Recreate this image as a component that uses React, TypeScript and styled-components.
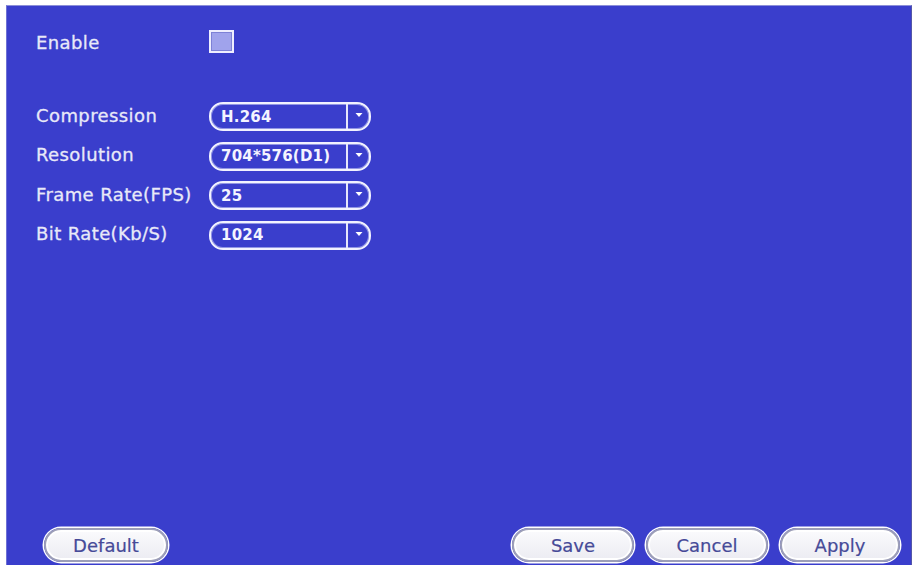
import React from "react";
import styled, { createGlobalStyle } from "styled-components";

const GlobalStyle = createGlobalStyle`
  html, body {
    margin: 0;
    padding: 0;
    background: #ffffff;
    overflow: hidden;
  }
  body {
    font-family: "DejaVu Sans", "Liberation Sans", sans-serif;
  }
`;

const Panel = styled.div`
  box-sizing: border-box;
  margin: 5px 0 0 6px;
  width: 906px;
  height: 560px;
  background: #3a3ecc;
  border-top: 1px solid #8c8fd8;
  border-right: 1px solid #5457a8;
  border-left: 1px solid #6e71d4;
  display: flex;
  flex-direction: column;
  padding: 24px 11px 3px 29px;
`;

const Form = styled.div`
  display: flex;
  flex-direction: column;
`;

const Row = styled.div<{ $gap?: number }>`
  display: flex;
  align-items: center;
  margin-top: ${(p) => p.$gap ?? 0}px;
`;

const Label = styled.span<{ $shift?: number }>`
  width: 173px;
  font-size: 18px;
  letter-spacing: 0.4px;
  color: #e8e9f8;
  -webkit-text-stroke: 0.3px #e8e9f8;
  margin-top: ${(p) => p.$shift ?? -3}px;
`;

const Check = styled.span`
  box-sizing: border-box;
  width: 25px;
  height: 23px;
  background: #a0a3ec;
  border: 2px solid #eeeeff;
  box-shadow: inset 0 0 0 1px #7d81d6;
`;

const SelectBox = styled.div`
  box-sizing: border-box;
  width: 162px;
  height: 29px;
  border: 2px solid #f2f2ff;
  border-radius: 14px;
  box-shadow: inset 0 0 0 1px #9296e4;
  display: flex;
  align-items: stretch;
  color: #f4f4ff;
`;

const SelectValue = styled.span`
  flex: 1;
  display: flex;
  align-items: center;
  padding-left: 10px;
  font-size: 15px;
  font-weight: bold;
  letter-spacing: 0.2px;
  border-right: 2px solid #e6e7fb;
`;

const Arrow = styled.span`
  width: 21px;
  display: flex;
  justify-content: center;
  padding-top: 8px;
  box-sizing: border-box;
`;

const Footer = styled.div`
  margin-top: auto;
  display: flex;
  align-items: center;
  padding-left: 8px;
  gap: 12px;
`;

const Spacer = styled.div`
  flex: 1;
`;

const Button = styled.button<{ $w?: number }>`
  box-sizing: border-box;
  width: ${(p) => p.$w ?? 122}px;
  height: 34px;
  border-radius: 17px;
  border: 2px solid #9c9eb8;
  box-shadow: 0 0 0 1.5px #ffffff, inset 0 0 0 2px #ffffff;
  background: linear-gradient(#fbfbfd, #ececf2);
  font-family: "DejaVu Sans", "Liberation Sans", sans-serif;
  font-size: 18px;
  color: #464a98;
  -webkit-text-stroke: 0.2px #464a98;
  padding: 0;
  display: flex;
  align-items: center;
  justify-content: center;
`;

const fields = [
  { label: "Compression", value: "H.264" },
  { label: "Resolution", value: "704*576(D1)" },
  { label: "Frame Rate(FPS)", value: "25" },
  { label: "Bit Rate(Kb/S)", value: "1024" },
];

const DownArrow = () => (
  <svg width="8" height="6" viewBox="0 0 8 6">
    <path d="M0.5 1 L7.5 1 L4 5 Z" fill="#ffffff" />
  </svg>
);

export default function App() {
  return (
    <>
      <GlobalStyle />
      <Panel>
        <Form>
          <Row>
            <Label $shift={1}>Enable</Label>
            <Check />
          </Row>
          {fields.map((f, i) => (
            <Row key={f.label} $gap={i === 0 ? 49 : 10.5}>
              <Label>{f.label}</Label>
              <SelectBox>
                <SelectValue>{f.value}</SelectValue>
                <Arrow>
                  <DownArrow />
                </Arrow>
              </SelectBox>
            </Row>
          ))}
        </Form>
        <Footer>
          <Button $w={124}>Default</Button>
          <Spacer />
          <Button>Save</Button>
          <Button>Cancel</Button>
          <Button $w={120}>Apply</Button>
        </Footer>
      </Panel>
    </>
  );
}
